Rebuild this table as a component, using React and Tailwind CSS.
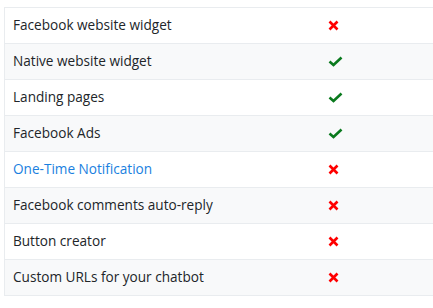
import React from "react";

const rows = [
  { name: "Facebook website widget", ok: false },
  { name: "Native website widget", ok: true },
  { name: "Landing pages", ok: true },
  { name: "Facebook Ads", ok: true },
  { name: "One-Time Notification", ok: false, link: true },
  { name: "Facebook comments auto-reply", ok: false },
  { name: "Button creator", ok: false },
  { name: "Custom URLs for your chatbot", ok: false },
];

function Cross() {
  return (
    <svg width="11" height="11" viewBox="0 0 11 11">
      <path d="M1.5 1.5 L9.5 9.5 M9.5 1.5 L1.5 9.5" stroke="#ff0000" strokeWidth="2.6" strokeLinecap="butt" />
    </svg>
  );
}

function Check() {
  return (
    <svg width="15" height="11" viewBox="0 0 15 11">
      <path d="M1.5 5.5 L5.5 9 L13.5 1.5" stroke="#0a7a1e" strokeWidth="2.6" fill="none" />
    </svg>
  );
}

export default function App() {
  return (
    <div className="w-[433px] h-[308px] bg-white overflow-hidden pt-[7px] pl-[4px]" style={{ fontFamily: '"Open Sans", sans-serif' }}>
      <table className="w-[460px] border-collapse text-[13.6px] text-[#212529]">
        <tbody>
          {rows.map((r, i) => (
            <tr key={i} className={i % 2 === 1 ? "bg-[#f8f9fa]" : "bg-white"}>
              <td className="h-[36px] border-y border-l border-[#e9ecef] pl-[8px] w-[292px]">
                <span className={r.link ? "text-[#1a7fe0]" : ""}>{r.name}</span>
              </td>
              <td className="h-[36px] border-y border-[#e9ecef] pl-[31px] align-middle">
                <div className="flex items-center">{r.ok ? <Check /> : <Cross />}</div>
              </td>
            </tr>
          ))}
        </tbody>
      </table>
    </div>
  );
}
